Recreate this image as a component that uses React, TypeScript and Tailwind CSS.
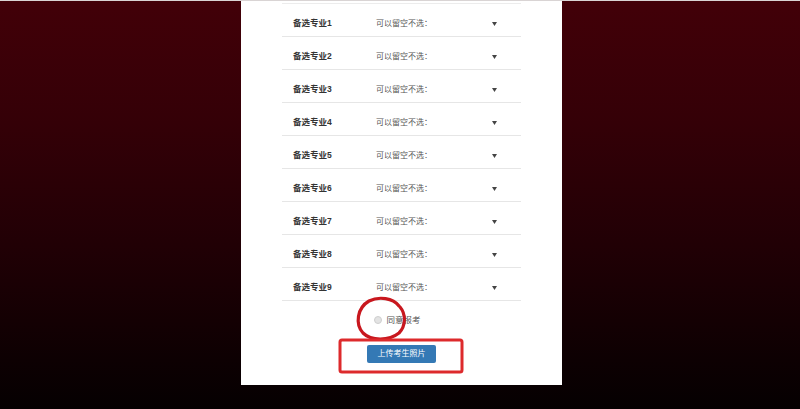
import React from "react";

const rows = [1, 2, 3, 4, 5, 6, 7, 8, 9];

export default function App() {
  return (
    <div
      className="relative h-[409px] w-[800px] overflow-hidden border-t border-[#d9d4d4] bg-[linear-gradient(180deg,#420008_0%,#340007_30%,#210005_60%,#0d0002_88%,#050001_100%)]"
      style={{ fontFamily: '"Liberation Sans", "Noto Sans CJK SC", sans-serif' }}
    >
      <div className="ml-[241px] w-[321px] bg-white pt-[2px] pb-[22px]">
        <div className="mx-[41px] border-t border-[#ececec]">
          {rows.map((n) => (
            <div
              key={n}
              className="flex h-[33px] items-center border-b border-[#e6e6e6] pt-[7px]"
            >
              <div className="w-[94px] pl-[11px] text-[8.5px] font-bold text-[#333]">
                备选专业{n}
              </div>
              <div className="flex-1 text-[8px] text-[#555]">可以留空不选：</div>
              <svg width="5" height="4" viewBox="0 0 5 4" className="mr-[24px]">
                <path d="M0 0 L5 0 L2.5 4 Z" fill="#444" />
              </svg>
            </div>
          ))}
        </div>
        <div className="mt-[14px] flex h-[10px] items-center justify-center gap-[4px] pr-[8px]">
          <span className="inline-block h-[8px] w-[8px] rounded-full border border-[#cfcfcf] bg-[#e3e3e3]" />
          <span className="text-[8.5px] text-[#555]">同意报考</span>
        </div>
        <div className="mt-[20px] flex justify-center">
          <button className="h-[18px] w-[69px] rounded-[2px] bg-[#3479b5] text-[8px] text-white">
            上传考生照片
          </button>
        </div>
      </div>
      <svg
        className="pointer-events-none absolute left-0 top-0"
        width="800"
        height="409"
        viewBox="0 0 800 409"
      >
        <path
          d="M399 305 C393 297 379 295 369 300 C357 307 355 323 363 332 C371 340 389 340 399 332 C406 325 406 313 400 306"
          fill="none"
          stroke="#c8171e"
          strokeWidth="3.2"
          strokeLinecap="round"
        />
        <rect
          x="340"
          y="339"
          width="122"
          height="32"
          rx="2"
          fill="none"
          stroke="#dd2a2c"
          strokeWidth="3"
        />
      </svg>
    </div>
  );
}
